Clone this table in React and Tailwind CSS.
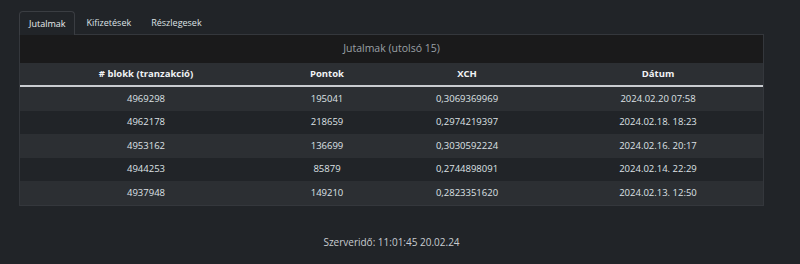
const ROWS = [
  ['4969298', '195041', '0,3069369969', '2024.02.20 07:58'],
  ['4962178', '218659', '0,2974219397', '2024.02.18. 18:23'],
  ['4953162', '136699', '0,3030592224', '2024.02.16. 20:17'],
  ['4944253', '85879', '0,2744898091', '2024.02.14. 22:29'],
  ['4937948', '149210', '0,2823351620', '2024.02.13. 12:50'],
];

const COLS = 'grid grid-cols-[252px_110px_170px_212px]';

export default function App() {
  return (
    <div
      className="w-[800px] h-[264px] bg-[#212428] text-[#dee2e6] pt-[11px] pl-[19px]"
      style={{ fontFamily: '"Open Sans", "Noto Sans", sans-serif' }}
    >
      {/* Tabs */}
      <div className="flex w-[745px] border-b border-[#34373c] text-[9px] h-[24px]">
        <div className="px-[9px] flex items-center border border-b-0 border-[#3a3d42] bg-[#212428] rounded-t-sm text-[#e9ecef] -mb-px">
          Jutalmak
        </div>
        <div className="pl-[11px] pr-[10px] flex items-center">Kifizetések</div>
        <div className="px-[10px] flex items-center">Részlegesek</div>
      </div>

      {/* Table panel */}
      <div className="w-[745px] border-x border-b border-[#34373c]">
        <div className="h-[28px] bg-[#1a1a1b] flex items-center justify-center text-[10.5px] text-[#9aa0a6]">
          Jutalmak (utolsó 15)
        </div>
        <div className={`${COLS} h-[24px] bg-[#2c2f33] border-b-2 border-[#c9ccd0] items-center text-center text-[9.5px] font-bold text-[#f1f3f5]`}>
          <div># blokk (tranzakció)</div>
          <div>Pontok</div>
          <div>XCH</div>
          <div>Dátum</div>
        </div>
        {ROWS.map((r, i) => (
          <div
            key={r[0]}
            className={`${COLS} h-[23.6px] items-center text-center text-[9.5px] ${i % 2 === 0 ? 'bg-[#2c2f33]' : 'bg-[#212428]'}`}
          >
            {r.map((c, j) => (
              <div key={j}>{c}</div>
            ))}
          </div>
        ))}
      </div>

      <div className="w-[745px] text-center mt-[29px] text-[10px] text-[#c8ccd0]">
        Szerveridő: 11:01:45 20.02.24
      </div>
    </div>
  );
}
